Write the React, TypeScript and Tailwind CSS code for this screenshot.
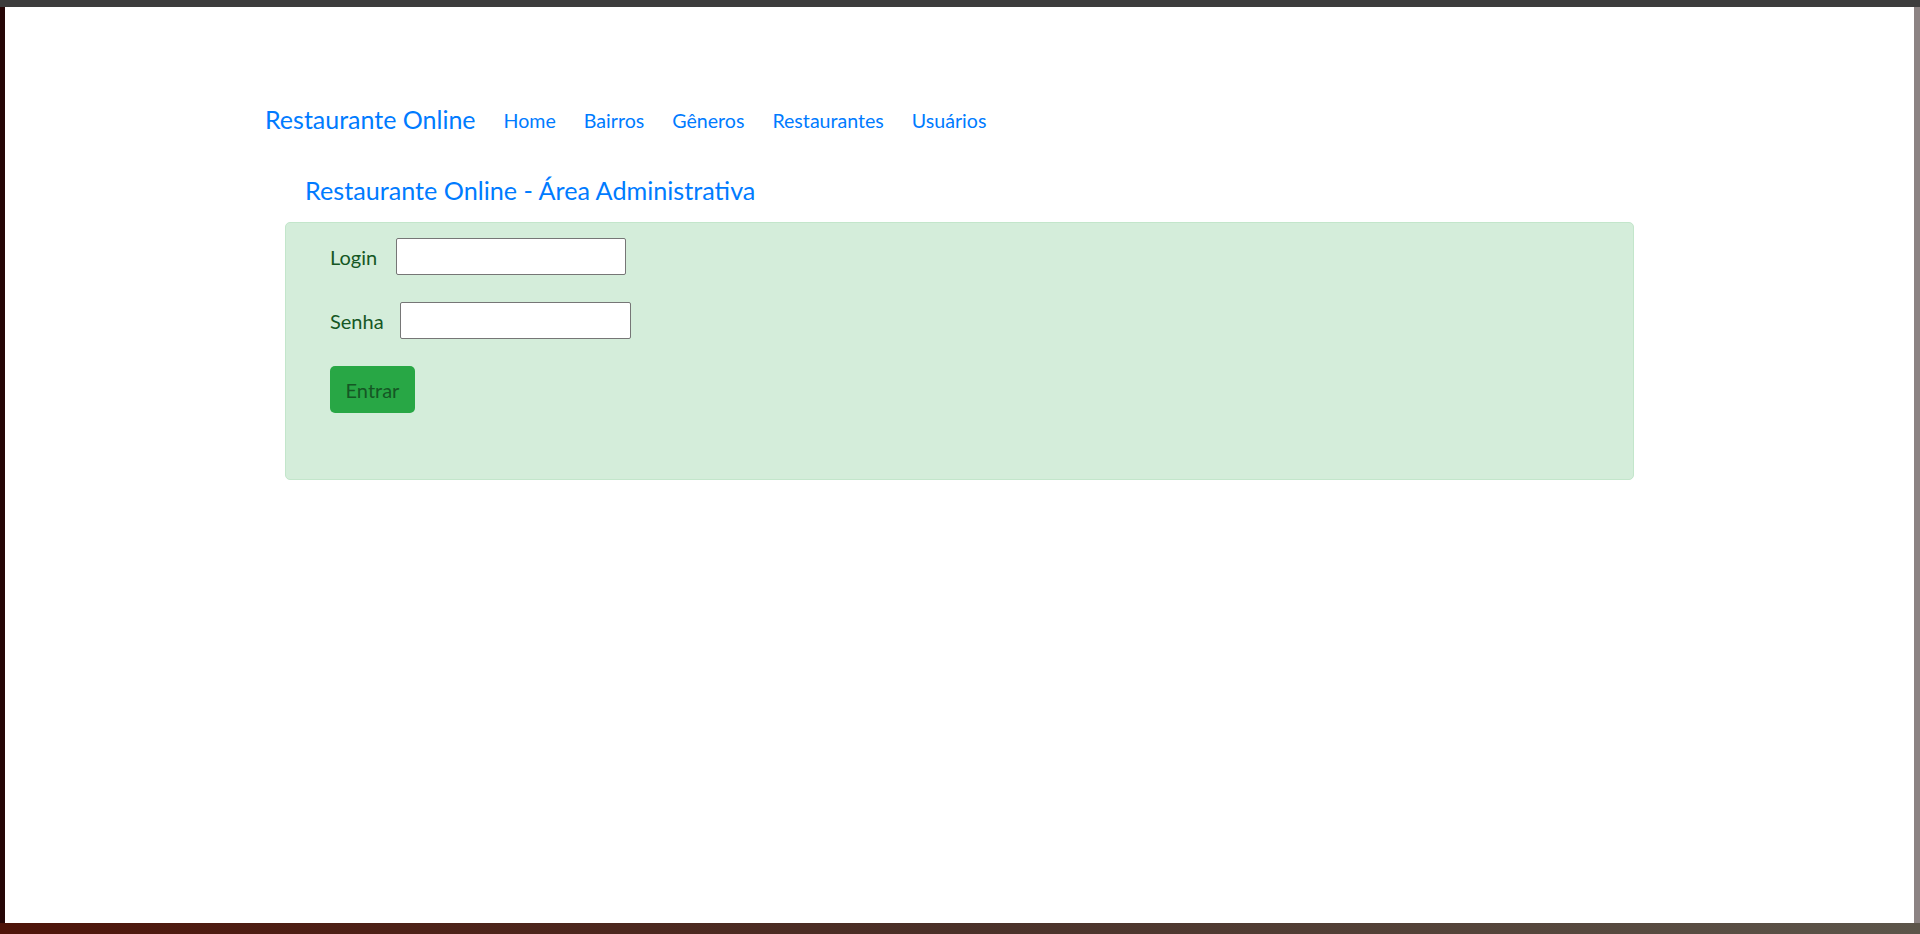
const links = ["Home", "Bairros", "Gêneros", "Restaurantes", "Usuários"];

const App = () => {
  return (
    <div className="h-[934px] w-[1920px] flex flex-col bg-[#2a0707] font-['Segoe_UI','Lato',sans-serif] overflow-hidden">
      {/* window title strip */}
      <div className="h-[7px] bg-[#3c3c3c] shrink-0" />

      <div className="flex flex-1 min-h-0">
        <div className="w-[5px] bg-[#260606]" />

        {/* page */}
        <main className="flex-1 bg-white">
          <nav className="pt-[93px] ml-[260px] flex items-center gap-[28px] h-[131px]">
            <a href="#" className="text-[25px] text-[#007bff] leading-[38px]">
              Restaurante Online
            </a>
            {links.map((l) => (
              <a key={l} href="#" className="text-[19.6px] text-[#007bff] leading-[38px] mt-[4px]">
                {l}
              </a>
            ))}
          </nav>

          <h4 className="ml-[300px] mt-[34px] text-[25.2px] leading-[36px] text-[#007bff]">
            Restaurante Online - Área Administrativa
          </h4>

          <div className="ml-[280px] mt-[14px] w-[1349px] h-[258px] bg-[#d4edda] border border-[#c3e6cb] rounded-[5px] pt-[15px] pl-[44px] text-[#155724] text-[20px]">
            <div className="flex items-center gap-[19px] h-[37px]">
              <label>Login</label>
              <input type="text" className="w-[230px] h-[37px] bg-white border border-[#767676] rounded-[2px]" />
            </div>
            <div className="flex items-center gap-[16px] h-[37px] mt-[27px]">
              <label>Senha</label>
              <input type="password" className="w-[231px] h-[37px] bg-white border border-[#767676] rounded-[2px]" />
            </div>
            <button className="mt-[27px] w-[85px] h-[47px] bg-[#28a745] rounded-[5px] text-[#155724] text-[20px]">
              Entrar
            </button>
          </div>
        </main>

        <div className="w-[6px] bg-[#8c8383]" />
      </div>

      <div className="h-[11px] shrink-0 bg-gradient-to-r from-[#4e1409] via-[#4a3028] to-[#5c554a]" />
    </div>
  );
};

export default App;
